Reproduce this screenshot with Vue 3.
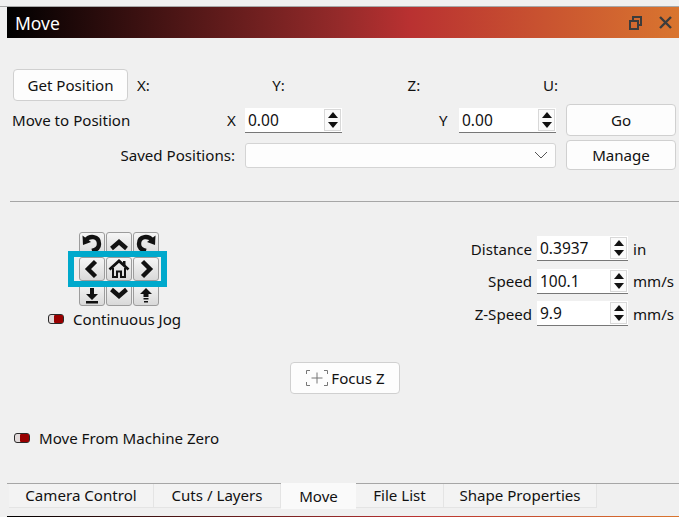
<script setup>
const coords = ['X:', 'Y:', 'Z:', 'U:']
const speeds = [
  { label: 'Distance', value: '0.3937', unit: 'in' },
  { label: 'Speed', value: '100.1', unit: 'mm/s' },
  { label: 'Z-Speed', value: '9.9', unit: 'mm/s' }
]
const tabs = [
  { name: 'Camera Control', w: 145 },
  { name: 'Cuts / Layers', w: 127 },
  { name: 'Move', w: 75, active: true },
  { name: 'File List', w: 88 },
  { name: 'Shape Properties', w: 153 }
]
const jog = [
  { k: 'ccw', stroke: 'M5 7 C8 3 18 2 18 11 C18 15 15 17 11 18', head: 'M1.5 2.5 L2 12 L10 9 Z' },
  { k: 'up', stroke: 'M3.5 15.5 L11 9 L18.5 15.5' },
  { k: 'cw', stroke: 'M17 7 C14 3 4 2 4 11 C4 15 7 17 11 18', head: 'M20.5 2.5 L20 12 L12 9 Z' },
  { k: 'left', stroke: 'M14.5 3.5 L7 11 L14.5 18.5' },
  { k: 'home' },
  { k: 'right', stroke: 'M7.5 3.5 L15 11 L7.5 18.5' },
  { k: 'zdown', head: 'M9 5 H13 V11 H17 L11 17 L5 11 H9 Z M5 18 H17 V20.5 H5 Z' },
  { k: 'down', stroke: 'M3.5 6.5 L11 13 L18.5 6.5' },
  { k: 'zup', head: 'M11 5 L17 11 H13.5 V14 H8.5 V11 H5 Z M8.5 15 H13.5 V16.5 H8.5 Z M9 18 H13 V19.5 H9 Z' }
]
</script>

<template>
  <div class="window">
    <header class="title">
      <span class="title-text">Move</span>
      <div class="title-icons">
        <svg width="13" height="14" viewBox="0 0 13 14" fill="none" stroke="#3c3c3c" stroke-width="2">
          <rect x="1" y="5" width="8" height="8" />
          <path d="M4 4 V1 H12 V9 H10" />
        </svg>
        <svg width="13" height="13" viewBox="0 0 13 13" fill="none" stroke="#3c3c3c" stroke-width="2.4">
          <path d="M1 1 L12 12 M12 1 L1 12" />
        </svg>
      </div>
    </header>

    <section class="row row-get">
      <button class="btn get">Get Position</button>
      <div class="coords">
        <span v-for="c in coords" :key="c" class="coord">{{ c }}</span>
      </div>
    </section>

    <section class="row row-move">
      <span class="move-label">Move to Position</span>
      <span class="axis axis-x">X</span>
      <div class="spin pos"><span class="spin-val">0.00</span><span class="arrows"><i class="up"></i><i class="down"></i></span></div>
      <span class="axis axis-y">Y</span>
      <div class="spin pos"><span class="spin-val">0.00</span><span class="arrows"><i class="up"></i><i class="down"></i></span></div>
      <button class="btn side">Go</button>
    </section>

    <section class="row row-saved">
      <span class="saved-label">Saved Positions:</span>
      <div class="combo">
        <svg width="14" height="8" viewBox="0 0 14 8" fill="none" stroke="#555" stroke-width="1">
          <path d="M1 1 L7 7 L13 1" />
        </svg>
      </div>
      <button class="btn side manage">Manage</button>
    </section>

    <hr class="sep" />

    <section class="controls">
      <div class="jog-col">
        <div class="jog-wrap">
          <div class="jog">
            <button v-for="b in jog" :key="b.k" class="jog-btn">
              <svg width="22" height="22" viewBox="0 0 22 22">
                <template v-if="b.k === 'home'">
                  <path d="M1.5 11.5 L11 3 L20.5 11.5" fill="none" stroke="#111" stroke-width="2.8" />
                  <path d="M5 10 V19 H9 V13.5 H13 V19 H17 V10" fill="none" stroke="#111" stroke-width="2" />
                  <path d="M15 3 H17.5 V8 H15 Z" fill="#111" />
                </template>
                <template v-else>
                  <path v-if="b.stroke" :d="b.stroke" fill="none" stroke="#111" stroke-width="4.4" />
                  <path v-if="b.head" :d="b.head" fill="#111" />
                </template>
              </svg>
            </button>
          </div>
          <div class="highlight"></div>
        </div>
        <div class="toggle-row jog-toggle">
          <span class="toggle"><b></b></span>
          <span>Continuous Jog</span>
        </div>
      </div>

      <div class="speeds">
        <div v-for="s in speeds" :key="s.label" class="speed-row">
          <span class="speed-label">{{ s.label }}</span>
          <div class="spin sp"><span class="spin-val">{{ s.value }}</span><span class="arrows"><i class="up"></i><i class="down"></i></span></div>
          <span class="unit">{{ s.unit }}</span>
        </div>
      </div>
    </section>

    <div class="focus-row">
      <button class="btn focus">
        <svg width="24" height="18" viewBox="0 0 24 18" fill="none" stroke="#777" stroke-width="1">
          <path d="M5 1.5 H1.5 V5 M1.5 13 V16.5 H5 M19 1.5 H22.5 V5 M22.5 13 V16.5 H19" />
          <path d="M12 3.5 V14.5 M6.5 9 H17.5" />
        </svg>
        <span>Focus Z</span>
      </button>
    </div>

    <div class="toggle-row zero-toggle">
      <span class="toggle"><b></b></span>
      <span>Move From Machine Zero</span>
    </div>

    <nav class="tabs">
      <span
        v-for="t in tabs"
        :key="t.name"
        class="tab"
        :class="{ active: t.active }"
        :style="{ width: t.w + 'px' }"
      >{{ t.name }}</span>
    </nav>
    <div class="bottom-line"></div>
  </div>
</template>

<style>
html, body { margin: 0; padding: 0; background: #f0f0f0; }
</style>

<style scoped>
.window {
  width: 679px;
  height: 517px;
  position: relative;
  overflow: hidden;
  display: flex;
  flex-direction: column;
  background: #f0f0f0;
  color: #111;
  font-family: "Noto Sans", sans-serif;
  font-size: 15.1px;
  line-height: 20px;
  box-sizing: border-box;
  padding-top: 6px;
}
.title {
  height: 31px;
  padding-left: 15px;
  border-top: 1px solid #a8a8a8;
  display: flex;
  align-items: center;
  justify-content: space-between;
  color: #fff;
  font-size: 17.5px;
  background: linear-gradient(90deg, #000 7px, #952a2a 340px, #b93131 410px, #d9752f 679px);
  position: relative;
}
.title::before {
  content: "";
  position: absolute;
  left: 0;
  top: 0;
  bottom: 0;
  width: 7px;
  background: #f0f0f0;
}
.title-text { position: relative; }
.title-icons {
  display: flex;
  gap: 17px;
  align-items: center;
  padding-right: 7px;
}
.btn {
  background: #fdfdfd;
  border: 1px solid #d0d0d0;
  border-radius: 4px;
  box-sizing: border-box;
  padding: 0;
  font: inherit;
  color: inherit;
}
.row { display: flex; align-items: center; }
.row-get { margin-top: 31px; height: 32px; padding-left: 13px; }
.get { width: 115px; height: 32px; }
.coords { display: flex; margin-left: 9px; }
.coord { width: 135.3px; }
.row-move { margin-top: 3px; height: 32px; padding-left: 12px; }
.move-label { width: 215px; }
.axis-x { width: 18px; }
.axis-y { width: 20px; margin-left: 97px; }
.side { width: 110px; height: 32px; margin-left: 10px; }
.spin {
  position: relative;
  box-sizing: border-box;
  background: #fff;
  border-bottom: 1px solid #777;
  height: 25px;
  display: flex;
  align-items: center;
}
.spin-val { padding-left: 3px; font-size: 15.5px; }
.pos { width: 97px; }
.sp { width: 91px; }
.arrows {
  position: absolute;
  right: 1px;
  top: 1px;
  width: 17px;
  height: 22px;
  display: flex;
  flex-direction: column;
  background: #f0f0f0;
  border: 1px solid #d8d8d8;
  box-sizing: border-box;
}
.arrows i {
  flex: 1;
  position: relative;
  background: #fbfbfb;
}
.arrows i::after {
  content: "";
  position: absolute;
  left: 2.5px;
  border-left: 5px solid transparent;
  border-right: 5px solid transparent;
}
.arrows .up::after { top: 2px; border-bottom: 6px solid #111; }
.arrows .down::after { bottom: 2px; border-top: 6px solid #111; }
.row-saved { margin-top: 4px; height: 30px; }
.saved-label { width: 235px; text-align: right; }
.combo {
  width: 311px;
  height: 25px;
  margin-left: 10px;
  box-sizing: border-box;
  background: #fdfdfd;
  border: 1px solid #d4d4d4;
  border-radius: 3px;
  display: flex;
  align-items: center;
  justify-content: flex-end;
  padding-right: 7px;
}
.manage { height: 30px; }
.sep {
  margin: 31px 0 0 10px;
  border: 0;
  border-top: 1px solid #a6a6a6;
  height: 0;
}
.controls {
  display: flex;
  justify-content: space-between;
  height: 131px;
}
.jog-col { padding-left: 48px; padding-top: 30px; }
.jog-wrap {
  position: relative;
  width: 80px;
  margin-left: 31px;
}
.jog {
  display: grid;
  grid-template-columns: repeat(3, 26px);
  grid-auto-rows: 24px;
  gap: 1px;
}
.jog-btn {
  box-sizing: border-box;
  padding: 0;
  border: 1px solid #9c9c9c;
  border-radius: 3px;
  background: linear-gradient(#f6f6f6, #d9d9d9);
  display: flex;
  align-items: center;
  justify-content: center;
  overflow: hidden;
}
.highlight {
  position: absolute;
  left: -11px;
  top: 19px;
  width: 99px;
  height: 36px;
  box-sizing: border-box;
  border: 6px solid #00a9cc;
  pointer-events: none;
}
.toggle-row {
  display: flex;
  align-items: center;
  gap: 9px;
}
.jog-toggle { margin-top: 3px; }
.toggle {
  width: 16px;
  height: 10px;
  box-sizing: border-box;
  border: 1px solid #2a2a2a;
  border-radius: 3px;
  background: #e2dada;
  position: relative;
  display: block;
}
.toggle b {
  position: absolute;
  right: 0;
  top: 0;
  bottom: 0;
  width: 9px;
  background: #980000;
  border-radius: 1px;
}
.speeds {
  padding-top: 34px;
  display: flex;
  flex-direction: column;
  gap: 7.5px;
  width: 235px;
}
.speed-row { display: flex; align-items: center; height: 25px; }
.speed-label { width: 88px; text-align: right; }
.speed-row .sp { margin-left: 5px; }
.unit { margin-left: 5px; }
.focus-row { padding-left: 290px; margin-top: 29px; }
.focus {
  width: 110px;
  height: 32px;
  display: flex;
  align-items: center;
  justify-content: center;
  gap: 2px;
}
.zero-toggle { margin: 34px 0 0 14px; }
.tabs {
  position: absolute;
  left: 7px;
  right: 0;
  top: 483px;
  height: 26px;
  border-top: 1px solid #a6a6a6;
  display: flex;
  align-items: flex-start;
  padding-left: 2px;
  box-sizing: border-box;
}
.tab {
  box-sizing: border-box;
  height: 24px;
  text-align: center;
  background: #f3f3f3;
  border-right: 1px solid #e4e4e4;
  border-bottom: 1px solid #e4e4e4;
  line-height: 23px;
}
.tab.active {
  background: #fafafa;
  height: 26px;
  margin-top: -1px;
  line-height: 27px;
  border: 0;
}
.bottom-line {
  position: absolute;
  left: 7px;
  right: 0;
  bottom: 0;
  height: 1px;
  background: linear-gradient(90deg, #000, #952a2a 50%, #b93131 60%, #d9752f);
}
</style>
